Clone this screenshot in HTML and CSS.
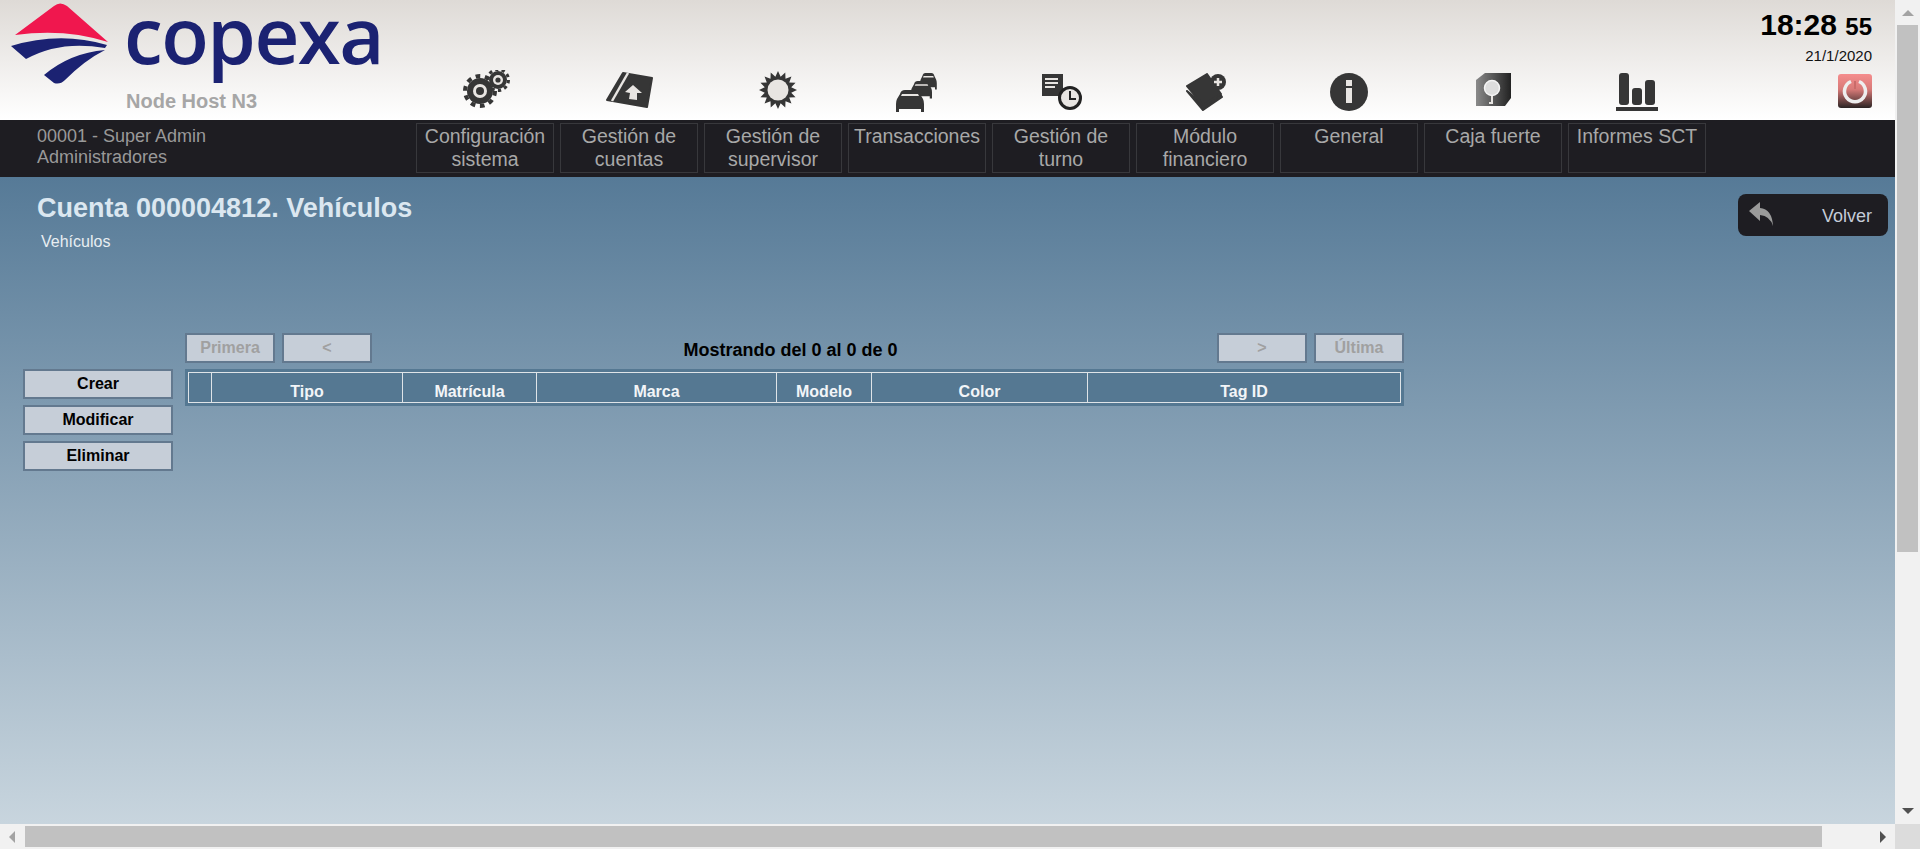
FILE: index.html
```html
<!DOCTYPE html>
<html lang="es">
<head>
<meta charset="utf-8">
<title>Cuenta 000004812. Vehículos</title>
<link rel="stylesheet" href="styles.css">
</head>
<body>
<div class="window">
  <div class="viewport">
    <div class="content">
      <header class="top">
        <div class="brand">
          <svg class="logo" width="120" height="90" viewBox="0 0 120 90">
            <path class="logo-red" d="M15 35 L54 6 Q60 1 67 6 L108 42 Q65 28 15 35Z"/>
            <path class="logo-blue" d="M11 46 Q60 31 107 45 L105 48 Q60 40 26 59Z"/>
            <path class="logo-blue" d="M44 75 Q70 53 105 50 Q85 60 65 80 Q60 85 54 83Z"/>
          </svg>
          <div class="logo-word">copexa</div>
          <div class="node">Node Host N3</div>
        </div>
        <div class="icons">
          <div class="icon"><svg width="60" height="46" viewBox="0 0 60 46">
            <circle class="ink" cx="25" cy="21" r="13"/><circle class="teeth" cx="25" cy="21" r="15" stroke-dasharray="4.7 4.7"/>
            <circle class="pale" cx="25" cy="21" r="7"/><circle class="ink" cx="25" cy="21" r="4"/>
            <circle class="ink" cx="43" cy="10" r="9"/><circle class="teeth-s" cx="43" cy="10" r="10.5" stroke-dasharray="3.3 3.3"/>
            <circle class="pale" cx="43" cy="10" r="5"/><circle class="ink" cx="43" cy="10" r="2.6"/>
          </svg></div>
          <div class="icon"><svg width="60" height="46" viewBox="0 0 60 46">
            <path class="ink round" d="M24 3 L8 30 L48 37 L53 8Z"/>
            <path class="line-pale" d="M29 3 L13 31"/>
            <path class="pale" d="M34 15 L43 23 L38 23 L38 30 L30 29 L31 23 L26 22Z"/>
          </svg></div>
          <div class="icon"><svg width="60" height="46" viewBox="0 0 60 46">
            <polygon class="ink" transform="translate(35 20)" points="19,0 13.24,2.63 17.55,7.27 11.22,7.5 13.44,13.44 7.5,11.22 7.27,17.55 2.63,13.24 0,19 -2.63,13.24 -7.27,17.55 -7.5,11.22 -13.44,13.44 -11.22,7.5 -17.55,7.27 -13.24,2.63 -19,0 -13.24,-2.63 -17.55,-7.27 -11.22,-7.5 -13.44,-13.44 -7.5,-11.22 -7.27,-17.55 -2.63,-13.24 0,-19 2.63,-13.24 7.27,-17.55 7.5,-11.22 13.44,-13.44 11.22,-7.5 17.55,-7.27 13.24,-2.63"/>
            <circle class="pale" cx="35" cy="20" r="10.5"/>
          </svg></div>
          <div class="icon"><svg width="60" height="46" viewBox="0 0 60 46">
            <defs><g id="car"><path class="ink" d="M4 4 Q5 0 9 0 H19 Q23 0 24 4 L27 9 Q28 11 28 14 V22 H25 V19 H3 V22 H0 V14 Q0 11 1 9Z"/><path class="pale" d="M6 4 H22 L23 6 H5Z"/></g></defs>
            <use href="#car" transform="translate(33 3) scale(.6 .75)"/>
            <use href="#car" transform="translate(24 11) scale(.75 .8)"/>
            <use href="#car" transform="translate(9 20)"/>
          </svg></div>
          <div class="icon"><svg width="60" height="46" viewBox="0 0 60 46">
            <rect class="ink" x="11" y="4" width="21" height="22"/>
            <path class="line-pale-s" d="M14 9 H27 M14 13 H27 M14 17 H24"/>
            <circle class="clock" cx="39" cy="28" r="10.5"/>
            <path class="clock-hand" d="M39 21 V29 H45"/>
          </svg></div>
          <div class="icon"><svg width="60" height="46" viewBox="0 0 60 46">
            <path class="ink round" d="M12 21 L28 40 L47 27 L45 24 L28 34Z"/>
            <path class="ink round" d="M12 16 L32 4 L46 24 L28 35Z"/>
            <circle class="ink" cx="43" cy="12" r="8"/>
            <path class="plus" d="M39 12 H47 M43 8 V16"/>
          </svg></div>
          <div class="icon"><svg width="60" height="46" viewBox="0 0 60 46">
            <circle class="ink" cx="30" cy="22" r="19"/>
            <rect class="pale" x="27" y="10" width="6" height="6"/>
            <rect class="pale" x="27" y="18" width="6" height="15"/>
          </svg></div>
          <div class="icon"><svg width="60" height="46" viewBox="0 0 60 46">
            <defs><linearGradient id="safe"><stop offset="0" stop-color="#8a8a8a"/><stop offset="1" stop-color="#222"/></linearGradient></defs>
            <path class="safe" d="M22 3 H48 V28 L42 36 H13 V10Z"/>
            <circle class="pale-b" cx="29" cy="18" r="7.5"/>
            <path class="line-pale-s" d="M29 26 V33 H26"/>
          </svg></div>
          <div class="icon"><svg width="60" height="46" viewBox="0 0 60 46">
            <rect class="ink" x="12" y="3" width="10" height="32" rx="3"/>
            <rect class="ink" x="25" y="18" width="10" height="17" rx="3"/>
            <rect class="ink" x="38" y="10" width="10" height="25" rx="3"/>
            <rect class="ink" x="9" y="37" width="42" height="4"/>
          </svg></div>
        </div>
        <div class="clockbox">
          <div class="time">18:28 <span class="secs">55</span></div>
          <div class="date">21/1/2020</div>
          <svg class="power" width="34" height="34" viewBox="0 0 34 34">
            <defs><linearGradient id="pw" x2="0" y2="1"><stop offset="0" stop-color="#f58d8d"/><stop offset=".45" stop-color="#d87a78"/><stop offset="1" stop-color="#2b2424"/></linearGradient></defs>
            <rect width="34" height="34" rx="3" fill="url(#pw)"/>
            <path class="power-ring" d="M13 7.5 A10.5 10.5 0 1 0 21 7.5"/>
            <path class="power-tick" d="M17 7 V15"/>
          </svg>
        </div>
      </header>
      <nav class="nav">
        <div class="user">00001 - Super Admin<br>Administradores</div>
        <div class="menu">
          <div class="menu-item">Configuración sistema</div>
          <div class="menu-item">Gestión de cuentas</div>
          <div class="menu-item">Gestión de supervisor</div>
          <div class="menu-item">Transacciones</div>
          <div class="menu-item">Gestión de turno</div>
          <div class="menu-item">Módulo financiero</div>
          <div class="menu-item">General</div>
          <div class="menu-item">Caja fuerte</div>
          <div class="menu-item">Informes SCT</div>
        </div>
      </nav>
      <main class="main">
        <div class="headline">
          <div>
            <h1 class="title">Cuenta 000004812. Vehículos</h1>
            <div class="subtitle">Vehículos</div>
          </div>
          <div class="back">
            <svg width="28" height="28" viewBox="0 0 28 28"><path class="back-arrow" d="M1 10 L12 1 V7 Q24 8 25 25 Q22 15 12 14 V20Z"/></svg>
            <span class="back-label">Volver</span>
          </div>
        </div>
        <div class="work">
          <div class="pager">
            <div class="pager-group">
              <div class="btn off">Primera</div>
              <div class="btn off">&lt;</div>
            </div>
            <div class="pager-info">Mostrando del 0 al 0 de 0</div>
            <div class="pager-group">
              <div class="btn off">&gt;</div>
              <div class="btn off">Última</div>
            </div>
          </div>
          <div class="actions">
            <div class="btn wide">Crear</div>
            <div class="btn wide">Modificar</div>
            <div class="btn wide">Eliminar</div>
          </div>
          <div class="table-wrap">
            <div class="table">
              <div class="th"></div>
              <div class="th">Tipo</div>
              <div class="th">Matrícula</div>
              <div class="th">Marca</div>
              <div class="th">Modelo</div>
              <div class="th">Color</div>
              <div class="th">Tag ID</div>
            </div>
          </div>
        </div>
      </main>
    </div>
    <div class="vbar">
      <div class="arrow arrow-up"></div>
      <div class="vthumb"></div>
      <div class="arrow arrow-down"></div>
    </div>
  </div>
  <div class="hbar">
    <div class="htrack">
      <div class="arrow arrow-left"></div>
      <div class="hthumb"></div>
      <div class="arrow arrow-right"></div>
    </div>
    <div class="corner"></div>
  </div>
</div>
</body>
</html>
```
FILE: styles.css
```css
* { box-sizing: border-box; }
html, body { margin: 0; padding: 0; overflow: hidden; }
body { font-family: "Liberation Sans", Arial, sans-serif; }
.window { width: 1920px; height: 849px; display: flex; flex-direction: column; overflow: hidden; }
.viewport { height: 824px; display: flex; }
.content { width: 1895px; display: flex; flex-direction: column; }

/* header */
.top { height: 120px; display: flex; background: linear-gradient(#dedad6, #ffffff); }
.brand { width: 413px; flex: none; position: relative; }
.logo { display: block; }
.logo-red { fill: #f0174e; }
.logo-blue { fill: #1b2272; }
.logo-word { position: absolute; left: 124px; top: 0; font-family: "Open Sans", sans-serif; font-weight: 600; font-size: 78px; line-height: 68px; letter-spacing: -1.5px; color: #1b2272; }
.node { position: absolute; left: 126px; top: 91px; font-size: 20px; line-height: 21px; font-weight: bold; color: #a6a6a6; }
.icons { display: grid; grid-template-columns: repeat(9, 144px); padding-top: 70px; }
.icon { display: flex; justify-content: center; height: 46px; }
.icon svg { filter: blur(.6px); }
.ink { fill: #363636; }
.round { stroke: #363636; stroke-width: 2; stroke-linejoin: round; }
.pale { fill: #e8e5e2; }
.pale-b { fill: #dddddd; stroke: #f4f4f4; stroke-width: 1.5; }
.teeth { fill: none; stroke: #363636; stroke-width: 4; }
.teeth-s { fill: none; stroke: #363636; stroke-width: 3; }
.line-pale { fill: none; stroke: #e8e5e2; stroke-width: 2.5; }
.line-pale-s { fill: none; stroke: #e8e5e2; stroke-width: 2; }
.clock { fill: #e8e5e2; stroke: #222222; stroke-width: 3; }
.clock-hand { fill: none; stroke: #222222; stroke-width: 2; }
.plus { fill: none; stroke: #e8e5e2; stroke-width: 2.5; }
.safe { fill: url(#safe); }
.clockbox { flex: 1; padding: 9px 23px 0 0; text-align: right; }
.time { font-size: 30px; line-height: 32px; font-weight: bold; color: #000; }
.secs { font-size: 24px; }
.date { font-size: 15px; line-height: 16px; margin-top: 5px; color: #111; }
.power { display: block; margin: 10px 0 0 auto; }
.power-ring { fill: none; stroke: #eeeeee; stroke-width: 3.5; }
.power-tick { fill: none; stroke: #c96c6a; stroke-width: 2; }

/* nav */
.nav { height: 57px; background: #1e1d22; display: flex; }
.user { width: 416px; flex: none; padding: 6px 0 0 37px; font-size: 18px; line-height: 21px; color: #999999; }
.menu { display: grid; grid-template-columns: repeat(9, 138px); column-gap: 6px; padding-top: 3px; height: 53px; }
.menu-item { border: 1.5px solid #38383c; color: #a8a8a8; font-size: 19.5px; line-height: 23px; text-align: center; padding: 1px 2px 0; }

/* main */
.main { flex: 1; background: linear-gradient(#567a97, #c8d5de); padding: 17px 7px 0 0; }
.headline { display: flex; justify-content: space-between; height: 139px; }
.title { margin: 0 0 0 37px; font-size: 27px; line-height: 28px; font-weight: bold; color: #dbe7f0; }
.subtitle { margin: 11px 0 0 41px; font-size: 16px; line-height: 18px; color: #e8eef2; }
.back { width: 150px; height: 42px; border-radius: 8px; background: #1e1d22; display: flex; align-items: center; justify-content: space-between; padding: 0 16px 0 10px; color: #c4ccd8; font-size: 18px; }
.back-label { padding-top: 2px; }
.back-arrow { fill: #9a9a9a; }
.work { display: grid; grid-template-columns: 150px 1219px; column-gap: 12px; row-gap: 6px; padding-left: 23px; }
.pager { grid-column: 2; display: flex; justify-content: space-between; align-items: center; }
.pager-group { display: flex; gap: 7px; }
.pager-info { font-size: 18px; font-weight: bold; color: #000; margin-right: 8px; position: relative; top: 2px; }
.btn { height: 30px; border: 2px solid #63798f; background: #c6ced8; font-size: 16px; line-height: 25px; font-weight: bold; text-align: center; color: #000; }
.btn.off { width: 90px; color: #a0a0a0; }
.actions { grid-column: 1; grid-row: 2; display: flex; flex-direction: column; gap: 6px; }
.table-wrap { grid-column: 2; grid-row: 2; height: 37px; padding: 3px; background: #557892; }
.table { height: 31px; border: 1px solid #dfe4e8; display: grid; grid-template-columns: 22px 191px 134px 240px 95px 216px 1fr; align-items: stretch; }
.th { color: #f2f5f8; font-size: 16px; font-weight: bold; text-align: center; line-height: 18px; padding-top: 10px; border-left: 1px solid #dfe4e8; }
.th:first-child { border-left: 0; }

/* scrollbars */
.vbar { width: 25px; background: #f1f1f1; display: flex; flex-direction: column; align-items: center; justify-content: space-between; position: relative; }
.vthumb { width: 21px; height: 527px; background: #c1c1c1; position: absolute; top: 25px; left: 2px; }
.arrow { width: 0; height: 0; border-style: solid; border-color: transparent; }
.arrow-up { margin-top: 10px; border-width: 0 6px 6px; border-bottom-color: #a3a3a3; }
.arrow-down { margin-bottom: 10px; border-width: 6px 6px 0; border-top-color: #505050; }
.hbar { height: 25px; display: flex; }
.htrack { width: 1895px; background: #f1f1f1; position: relative; display: flex; align-items: center; justify-content: space-between; padding: 0 9px; }
.hthumb { position: absolute; left: 25px; top: 2px; width: 1797px; height: 21px; background: #c1c1c1; }
.arrow-left { border-width: 6px 6px 6px 0; border-right-color: #a3a3a3; }
.arrow-right { border-width: 6px 0 6px 6px; border-left-color: #505050; }
.corner { flex: 1; background: #dcdcdc; }
```
